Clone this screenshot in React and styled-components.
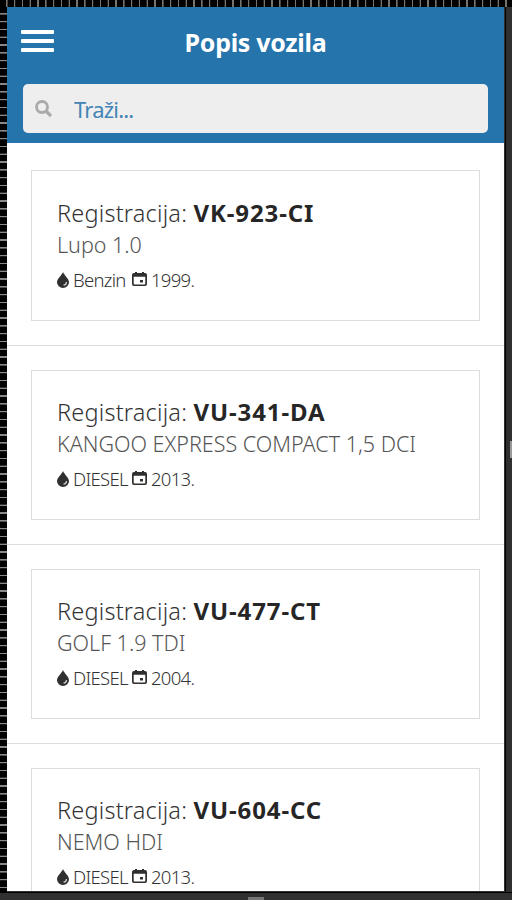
import React from "react";
import styled, { createGlobalStyle } from "styled-components";

const GlobalStyle = createGlobalStyle`
  * {
    box-sizing: border-box;
  }

  body {
    margin: 0;
    overflow: hidden;
    background: #303030;
    font-family: "Noto Sans", sans-serif;
  }
`;

const Frame = styled.div`
  display: grid;
  grid-template-columns: 7px 498px 7px;
  grid-template-rows: 7px 885px 8px;
  width: 512px;
  height: 900px;
  overflow: hidden;
`;

const TopRuler = styled.div`
  grid-column: 1 / 4;
  background: repeating-linear-gradient(
    90deg,
    #000 0 6px,
    #77736e 6.3px 7.3px,
    #000 7.8px
  );
`;

const LeftRuler = styled.div`
  background: repeating-linear-gradient(
    180deg,
    #000 0 6px,
    #888 6.3px 7.3px,
    #000 7.8px
  );
`;

const Screen = styled.main`
  background: #fff;
  overflow: hidden;
  border-right: 1px solid #333;
  border-bottom: 1px solid #333;
`;

const RightHandle = styled.div`
  display: flex;
  align-items: center;
  justify-content: flex-end;
  border-left: 1px solid #000;
  background: #303030;

  &::after {
    content: "";
    width: 2px;
    height: 17px;
    background: #999;
  }
`;

const BottomHandle = styled.div`
  grid-column: 1 / 4;
  display: flex;
  align-items: flex-end;
  justify-content: center;
  border-top: 1px solid #000;
  background: #303030;

  &::after {
    content: "";
    width: 16px;
    height: 3px;
    background: #777;
  }
`;

const Header = styled.header`
  height: 136px;
  padding: 0 16px;
  background: #2574ab;
`;

const TitleBar = styled.div`
  display: grid;
  grid-template-columns: 33px 1fr 33px;
  align-items: center;
  height: 77px;
  padding-bottom: 8px;
`;

const MenuButton = styled.button`
  display: flex;
  flex-direction: column;
  gap: 5px;
  width: 33px;
  padding: 0;
  border: 0;
  background: none;
  margin: -1px 0 0 -2px;

  span {
    width: 33px;
    height: 4px;
    border-radius: 1px;
    background: #fff;
  }
`;

const Title = styled.h1`
  margin: 0;
  color: #fff;
  font-size: 25px;
  font-weight: 700;
  line-height: 32px;
  letter-spacing: -0.3px;
  text-align: center;
`;

const SearchBox = styled.label`
  display: flex;
  align-items: center;
  height: 49px;
  padding: 0 12px;
  border-radius: 5px;
  background: #eee;

  svg {
    flex: none;
    margin-right: 22px;
  }
`;

const SearchInput = styled.input`
  flex: 1;
  min-width: 0;
  padding: 0;
  border: 0;
  outline: 0;
  background: none;
  font: 22px "Noto Sans", sans-serif;
  letter-spacing: -0.8px;

  &::placeholder {
    color: #4484b5;
  }
`;

const List = styled.ul`
  margin: 0;
  padding: 0;
  list-style: none;
`;

const Item = styled.li`
  height: 199.2px;
  padding: 24px;
  border-bottom: 1px solid #ddd;

  &:first-child {
    height: 203px;
    padding-top: 27px;
  }

  &:not(:first-child) article {
    height: 150px;
    padding-top: 25px;
  }
`;

const Card = styled.article`
  height: 151px;
  padding: 26px 25px;
  border: 1px solid #ddd;
`;

const Registration = styled.h2`
  margin: 0;
  color: #333;
  font-size: 23.5px;
  font-weight: 300;
  line-height: 32px;
  letter-spacing: 0.2px;
  white-space: nowrap;

  strong {
    color: #262626;
    font-size: 24px;
    font-weight: 700;
    letter-spacing: 0.9px;
  }
`;

const Model = styled.p`
  margin: 0;
  color: #555;
  font-size: 21.5px;
  font-weight: 300;
  line-height: 32px;
  white-space: nowrap;
`;

const Details = styled.div`
  display: flex;
  align-items: center;
  height: 37px;
  color: #333;
  font-size: 18.5px;
  font-weight: 300;
  letter-spacing: -0.7px;
  white-space: nowrap;

  svg {
    flex: none;
  }
`;

const Detail = styled.span`
  width: 54px;
  margin: 0 5px 0 4px;
`;

const vehicles = [
  { plate: "VK-923-CI", model: "Lupo 1.0", fuel: "Benzin", year: "1999." },
  {
    plate: "VU-341-DA",
    model: "KANGOO EXPRESS COMPACT 1,5 DCI",
    fuel: "DIESEL",
    year: "2013.",
  },
  { plate: "VU-477-CT", model: "GOLF 1.9 TDI", fuel: "DIESEL", year: "2004." },
  { plate: "VU-604-CC", model: "NEMO HDI", fuel: "DIESEL", year: "2013." },
];

function SearchIcon() {
  return (
    <svg width="17" height="18" viewBox="0 0 17 18" fill="none">
      <circle cx="7" cy="7" r="5.5" stroke="#aaa" strokeWidth="2.8" />
      <path d="M11 11l5 5" stroke="#aaa" strokeWidth="3.2" />
    </svg>
  );
}

function DropIcon() {
  return (
    <svg width="12" height="16" viewBox="0 0 12 16">
      <path
        d="M6 0C5 3 0 6.7 0 10.3a6 5.7 0 0 0 12 0C12 6.7 7 3 6 0z"
        fill="#303030"
      />
      <path
        d="M6.5 13.2c1.8-.2 3-1.4 3-3.2"
        fill="none"
        stroke="#ccc"
        strokeWidth="1.3"
      />
    </svg>
  );
}

function CalendarIcon() {
  return (
    <svg width="15" height="15" viewBox="0 0 15 15">
      <path
        d="M2 1h1V0h2v1h5V0h2v1h1q2 0 2 2v9q0 2-2 2H2q-2 0-2-2V3q0-2 2-2zm-.3 3.7v6.8q0 .9.9.9h9.8q.9 0 .9-.9V4.7z"
        fill="#303030"
        fillRule="evenodd"
      />
      <rect x="8" y="8" width="3" height="2.5" fill="#303030" />
    </svg>
  );
}

function Vehicle({ vehicle }) {
  return (
    <Item>
      <Card>
        <Registration>
          Registracija: <strong>{vehicle.plate}</strong>
        </Registration>
        <Model>{vehicle.model}</Model>
        <Details>
          <DropIcon />
          <Detail>{vehicle.fuel}</Detail>
          <CalendarIcon />
          <Detail>{vehicle.year}</Detail>
        </Details>
      </Card>
    </Item>
  );
}

function App() {
  return (
    <>
      <GlobalStyle />
      <Frame>
        <TopRuler />
        <LeftRuler />
        <Screen>
          <Header>
            <TitleBar>
              <MenuButton aria-label="Menu">
                <span />
                <span />
                <span />
              </MenuButton>
              <Title>Popis vozila</Title>
            </TitleBar>
            <SearchBox>
              <SearchIcon />
              <SearchInput placeholder="Traži..." />
            </SearchBox>
          </Header>
          <List>
            {vehicles.map((vehicle) => (
              <Vehicle key={vehicle.plate} vehicle={vehicle} />
            ))}
          </List>
        </Screen>
        <RightHandle />
        <BottomHandle />
      </Frame>
    </>
  );
}

export default App;
